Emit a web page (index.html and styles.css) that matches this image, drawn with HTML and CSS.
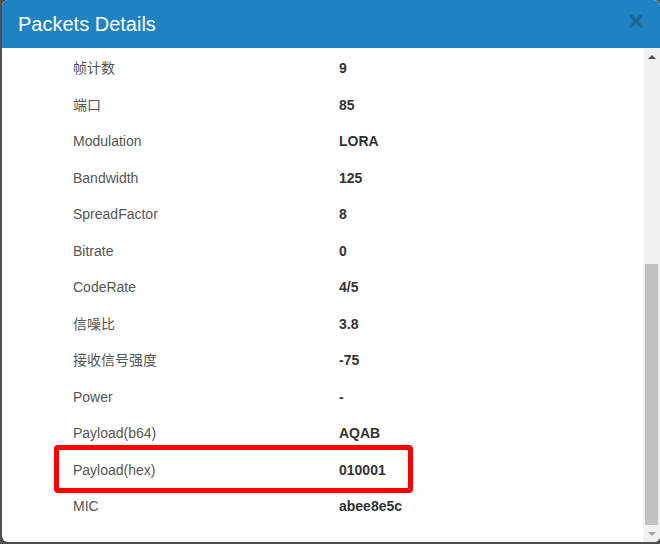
FILE: index.html
```html
<!DOCTYPE html>
<html>
<head>
<meta charset="utf-8">
<link rel="stylesheet" href="styles.css">
</head>
<body>
<div class="modal">
  <div class="modal-header">
    <h4 class="modal-title">Packets Details</h4>
    <svg class="close" width="14" height="14" viewBox="0 0 14 14"><path d="M2 2 L12 12 M12 2 L2 12" stroke="currentColor" stroke-width="3.2" stroke-linecap="round"/></svg>
  </div>
  <div class="modal-main">
    <div class="modal-body">
      <div class="row"><span class="label">帧计数</span><span class="value">9</span></div>
      <div class="row"><span class="label">端口</span><span class="value">85</span></div>
      <div class="row"><span class="label">Modulation</span><span class="value">LORA</span></div>
      <div class="row"><span class="label">Bandwidth</span><span class="value">125</span></div>
      <div class="row"><span class="label">SpreadFactor</span><span class="value">8</span></div>
      <div class="row"><span class="label">Bitrate</span><span class="value">0</span></div>
      <div class="row"><span class="label">CodeRate</span><span class="value">4/5</span></div>
      <div class="row"><span class="label">信噪比</span><span class="value">3.8</span></div>
      <div class="row"><span class="label">接收信号强度</span><span class="value">-75</span></div>
      <div class="row"><span class="label">Power</span><span class="value">-</span></div>
      <div class="row"><span class="label">Payload(b64)</span><span class="value">AQAB</span></div>
      <div class="row highlighted"><span class="label">Payload(hex)</span><span class="value">010001</span><span class="mark"></span></div>
      <div class="row"><span class="label">MIC</span><span class="value">abee8e5c</span></div>
    </div>
    <div class="scrollbar">
      <div class="sb-btn"><span class="arrow-up"></span></div>
      <div class="sb-track"><div class="sb-thumb"></div></div>
      <div class="sb-btn"><span class="arrow-down"></span></div>
    </div>
  </div>
</div>
</body>
</html>
```
FILE: styles.css
```css
html, body {
  margin: 0;
  padding: 0;
}
body {
  width: 660px;
  height: 544px;
  background: #4f4f4f;
  overflow: hidden;
  font-family: "Liberation Sans", "Noto Sans CJK SC", Arial, sans-serif;
}
.modal {
  margin-left: 2px;
  width: 658px;
  height: 542px;
  background: #fff;
  border-radius: 6px;
  overflow: hidden;
  display: flex;
  flex-direction: column;
}
.modal-header {
  height: 48px;
  flex: 0 0 48px;
  background: #1f83c3;
  display: flex;
  align-items: center;
  justify-content: space-between;
  padding: 0 17px 0 16px;
  box-sizing: border-box;
}
.modal-title {
  margin: 0;
  color: #fff;
  font-size: 20px;
  font-weight: normal;
  line-height: 22px;
  position: relative;
  top: 0px;
}
.close {
  color: #18699c;
  position: relative;
  top: -3px;
}
.modal-main {
  flex: 1;
  display: flex;
  min-height: 0;
}
.modal-body {
  flex: 1;
  padding-top: 1.75px;
}
.row {
  display: grid;
  grid-template-columns: 266px 1fr;
  height: 36.5px;
  align-items: center;
  padding-left: 71px;
  font-size: 14px;
  line-height: 20px;
  position: relative;
}
.label {
  color: #555;
}
.value {
  color: #333;
  font-weight: bold;
}
.mark {
  position: absolute;
  left: 52px;
  top: -6.75px;
  width: 359px;
  height: 48px;
  border: 5px solid #ff0000;
  border-radius: 4px;
  box-sizing: border-box;
}
.scrollbar {
  width: 17px;
  flex: 0 0 17px;
  background: #f1f1f1;
  display: flex;
  flex-direction: column;
}
.sb-btn {
  height: 17px;
  flex: 0 0 17px;
  display: flex;
  align-items: center;
  justify-content: center;
}
.arrow-up {
  width: 0;
  height: 0;
  border-left: 4px solid transparent;
  border-right: 4px solid transparent;
  border-bottom: 4px solid #505050;
}
.arrow-down {
  width: 0;
  height: 0;
  border-left: 4px solid transparent;
  border-right: 4px solid transparent;
  border-top: 4px solid #a3a3a3;
}
.sb-track {
  flex: 1;
  display: flex;
  flex-direction: column;
  justify-content: flex-end;
}
.sb-thumb {
  height: 261px;
  margin: 0 2px;
  background: #c1c1c1;
}
```
